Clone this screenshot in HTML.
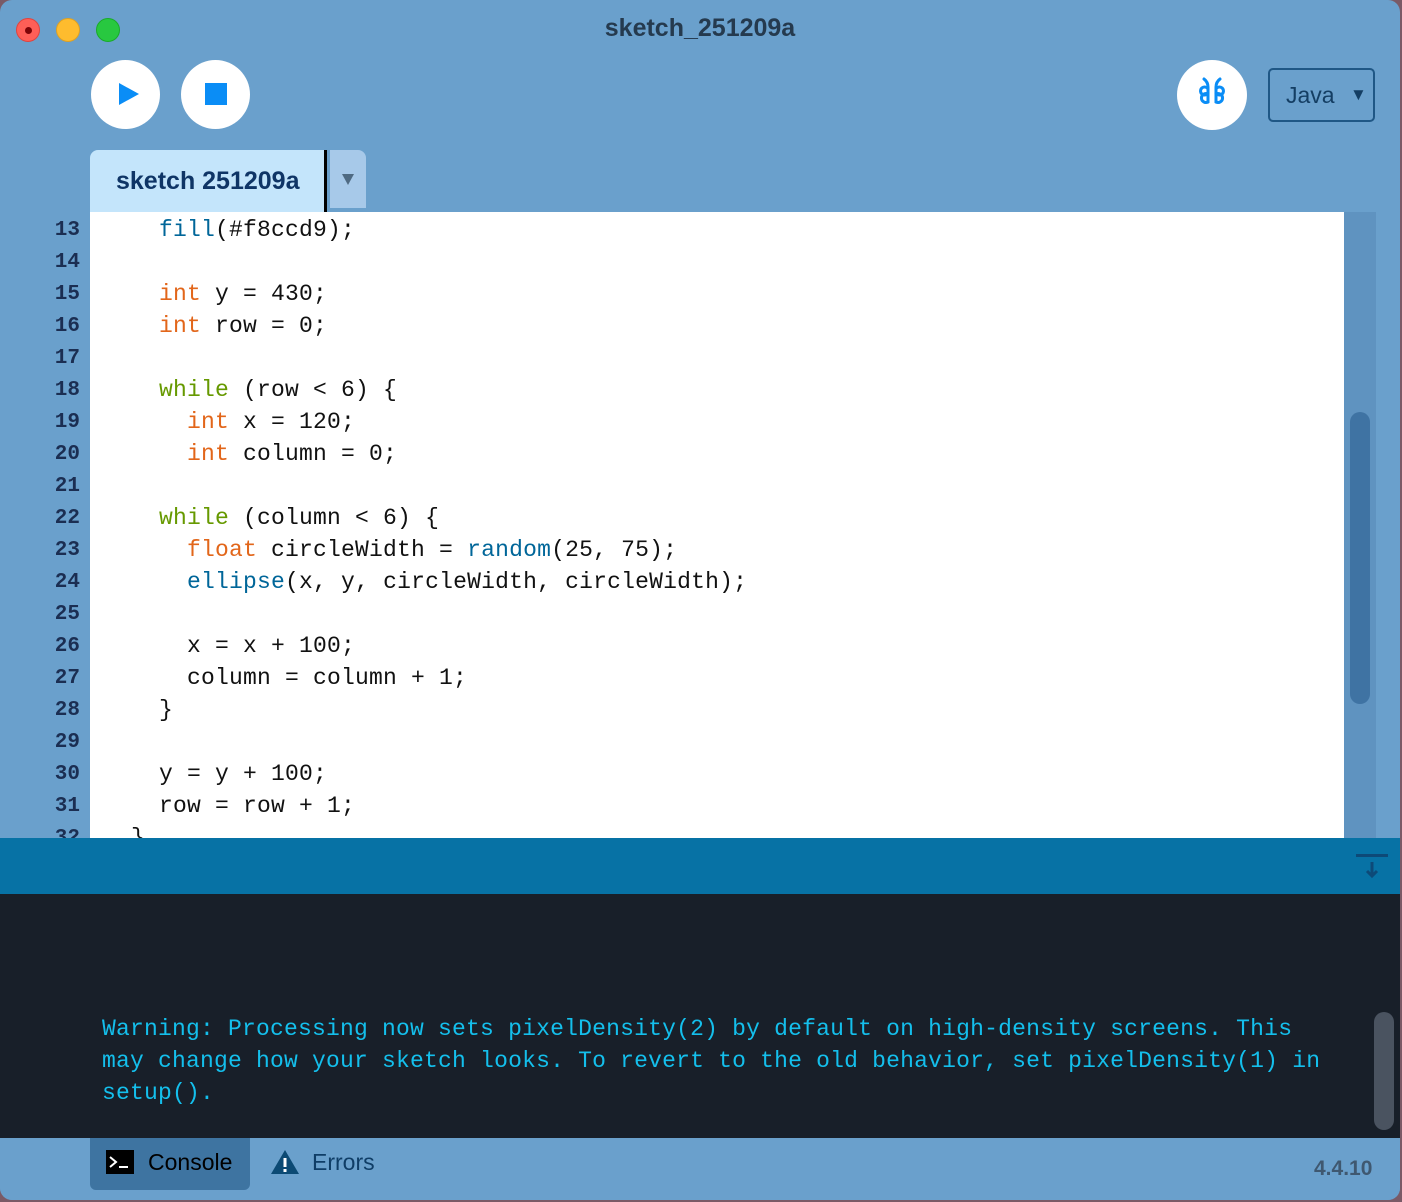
<!DOCTYPE html>
<html><head><meta charset="utf-8"><style>
*{margin:0;padding:0;box-sizing:border-box}
html,body{width:1402px;height:1202px;overflow:hidden;background:#7a5a66}
#win{position:absolute;left:0;top:0;width:1400px;height:1200px;background:#6aa0cc;border-radius:12px;overflow:hidden;font-family:"Liberation Sans",sans-serif}
.dot{position:absolute;top:18px;width:24px;height:24px;border-radius:50%}
.title{position:absolute;top:14px;left:0;width:1400px;text-align:center;font-size:25px;font-weight:bold;color:#253a4e}
.cbtn{position:absolute;top:60px;width:69px;height:69px;border-radius:50%;background:#fff}
.tab{position:absolute;left:90px;top:150px;width:234px;height:62px;background:#c4e5fb;border-radius:8px 0 0 0;font-size:25px;font-weight:bold;color:#0f3566;padding:17px 0 0 26px}
.tabarrow{position:absolute;left:330px;top:150px;width:36px;height:58px;background:#a7c9e9;border-radius:0 8px 0 0}
#gutter{position:absolute;left:0;top:212px;width:90px;height:626px;overflow:hidden}
#editor{position:absolute;left:90px;top:212px;width:1254px;height:626px;background:#fff;overflow:hidden}
.ln{position:absolute;right:10px;font-family:"Liberation Mono",monospace;font-weight:bold;font-size:21px;color:#1b2e52}
.cl{position:absolute;left:13px;font-family:"Liberation Mono",monospace;font-size:23px;letter-spacing:0.2px;color:#111;white-space:pre}
.k{color:#e2661a}.w{color:#669900}.f{color:#006699}
#sbar{position:absolute;left:1344px;top:212px;width:32px;height:626px;background:#5f93c0}
#sthumb{position:absolute;left:1350px;top:412px;width:20px;height:292px;border-radius:10px;background:#3f73a3}
#cbar{position:absolute;left:0;top:838px;width:1400px;height:56px;background:#0772a5}
#con{position:absolute;left:0;top:894px;width:1400px;height:244px;background:#181f29;overflow:hidden}
.cw{position:absolute;left:102px;font-family:"Liberation Mono",monospace;font-size:23px;letter-spacing:0.2px;color:#14bfec;white-space:pre}
#cthumb{position:absolute;left:1374px;top:118px;width:20px;height:118px;border-radius:10px;background:#4a5360}
#bottom{position:absolute;left:0;top:1138px;width:1400px;height:62px;background:#6aa0cc}
</style></head><body>
<div id="win">
<div class="dot" style="left:16px;background:#fe5f57;border:1px solid #e0443e"><div style="position:absolute;left:8px;top:8px;width:7px;height:7px;border-radius:50%;background:#7e0508"></div></div>
<div class="dot" style="left:56px;background:#febc2e;border:1px solid #dea123"></div>
<div class="dot" style="left:96px;background:#28c840;border:1px solid #1aab29"></div>
<div class="title">sketch_251209a</div>
<div class="cbtn" style="left:91px"><svg width="69" height="69"><polygon points="28,23 28,45 48,34" fill="#0a8df6"/></svg></div>
<div class="cbtn" style="left:181px"><svg width="69" height="69"><rect x="24" y="23" width="22" height="22" fill="#0a8df6"/></svg></div>
<div class="cbtn" style="left:1177px;top:60px;width:70px;height:70px"><svg width="70" height="70" fill="none" stroke="#0a8df6" stroke-width="3" stroke-linecap="round"><path d="M27 19 Q31 22 31 27 L31 42"/><path d="M43 19 Q39 22 39 27 L39 42"/><path d="M31 29 A4 4 0 1 0 31 33 M31 34 A4.5 4.5 0 1 0 31 42"/><path d="M39 29 A4 4 0 1 1 39 33 M39 34 A4.5 4.5 0 1 1 39 42"/></svg></div>
<div style="position:absolute;left:1268px;top:68px;width:107px;height:54px;border:2px solid #1f5785;border-radius:5px;color:#143e63;font-size:23px;padding:12px 0 0 16px">Java <span style="font-size:17px;position:absolute;left:80px;top:15px">▼</span></div>
<div class="tab">sketch 251209a</div>
<div style="position:absolute;left:324px;top:150px;width:3px;height:62px;background:#000"></div>
<div class="tabarrow"><svg width="36" height="58"><polygon points="12,24 24,24 18,35" fill="#4f6a82"/></svg></div>
<div id="gutter">
<div class="ln" style="top:7px">13</div><div class="ln" style="top:39px">14</div><div class="ln" style="top:71px">15</div><div class="ln" style="top:103px">16</div><div class="ln" style="top:135px">17</div><div class="ln" style="top:167px">18</div><div class="ln" style="top:199px">19</div><div class="ln" style="top:231px">20</div><div class="ln" style="top:263px">21</div><div class="ln" style="top:295px">22</div><div class="ln" style="top:327px">23</div><div class="ln" style="top:359px">24</div><div class="ln" style="top:391px">25</div><div class="ln" style="top:423px">26</div><div class="ln" style="top:455px">27</div><div class="ln" style="top:487px">28</div><div class="ln" style="top:519px">29</div><div class="ln" style="top:551px">30</div><div class="ln" style="top:583px">31</div><div class="ln" style="top:615px">32</div>
</div>
<div id="editor">
<div class="cl" style="top:5px">    <span class="f">fill</span>(#f8ccd9);</div>
<div class="cl" style="top:69px">    <span class="k">int</span> y = 430;</div>
<div class="cl" style="top:101px">    <span class="k">int</span> row = 0;</div>
<div class="cl" style="top:165px">    <span class="w">while</span> (row &lt; 6) {</div>
<div class="cl" style="top:197px">      <span class="k">int</span> x = 120;</div>
<div class="cl" style="top:229px">      <span class="k">int</span> column = 0;</div>
<div class="cl" style="top:293px">    <span class="w">while</span> (column &lt; 6) {</div>
<div class="cl" style="top:325px">      <span class="k">float</span> circleWidth = <span class="f">random</span>(25, 75);</div>
<div class="cl" style="top:357px">      <span class="f">ellipse</span>(x, y, circleWidth, circleWidth);</div>
<div class="cl" style="top:421px">      x = x + 100;</div>
<div class="cl" style="top:453px">      column = column + 1;</div>
<div class="cl" style="top:485px">    }</div>
<div class="cl" style="top:549px">    y = y + 100;</div>
<div class="cl" style="top:581px">    row = row + 1;</div>
<div class="cl" style="top:613px">  }</div>
</div>
<div id="sbar"></div><div id="sthumb"></div>
<div id="cbar"><svg style="position:absolute;left:1354px;top:14px" width="36" height="30"><rect x="2" y="2" width="32" height="3" fill="#0d4a78"/><path d="M18 10 V24 M13 19 L18 24 L23 19" stroke="#0d4a78" stroke-width="3" fill="none"/></svg></div>
<div id="con">
<div class="cw" style="top:122px">Warning: Processing now sets pixelDensity(2) by default on high-density screens. This</div>
<div class="cw" style="top:154px">may change how your sketch looks. To revert to the old behavior, set pixelDensity(1) in</div>
<div class="cw" style="top:186px">setup().</div>
<div id="cthumb"></div>
</div>
<div id="bottom">
<div style="position:absolute;left:90px;top:0;width:160px;height:52px;background:#3e74a1;border-radius:0 0 6px 6px"></div>
<svg style="position:absolute;left:106px;top:12px" width="28" height="24"><rect width="28" height="24" fill="#000"/><path d="M4 7 L10 12 L4 17" stroke="#fff" stroke-width="2" fill="none"/><rect x="13" y="16" width="9" height="2" fill="#fff"/></svg>
<div style="position:absolute;left:148px;top:11px;font-size:23px;color:#000">Console</div>
<svg style="position:absolute;left:270px;top:10px" width="30" height="28"><polygon points="15,2 29,26 1,26" fill="#0c4a74"/><rect x="13.5" y="10" width="3" height="9" fill="#fff"/><rect x="13.5" y="21" width="3" height="3" fill="#fff"/></svg>
<div style="position:absolute;left:312px;top:11px;font-size:23px;color:#0f3d66">Errors</div>
<div style="position:absolute;left:1314px;top:19px;font-size:21px;font-weight:bold;color:#3f5870">4.4.10</div>
</div>
</div>
</body></html>
